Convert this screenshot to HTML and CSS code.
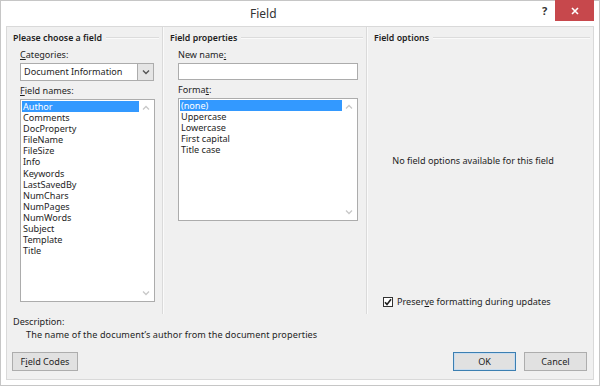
FILE: index.html
```html
<!doctype html>
<html>
<head>
<meta charset="utf-8">
<title>Field</title>
<link rel="stylesheet" href="styles.css">
</head>
<body>
<div class="window">
    <div class="titlebar">
        <span class="title">Field</span>
        <span class="help">?</span>
        <span class="close">
            <svg width="10" height="10" viewBox="0 0 10 10"><path d="M2 2 L8 8 M8 2 L2 8" stroke="#fff" stroke-width="1.6"/></svg>
        </span>
    </div>

    <div class="panel">
        <div class="columns">
            <section class="group choose">
                <div class="group-head"><span>Please choose a field</span></div>
                <div class="group-body">
                    <label><u>C</u>ategories:</label>
                    <div class="select">
                        <span class="select-value">Document Information</span>
                        <span class="select-btn">
                            <svg width="8" height="6" viewBox="0 0 8 6"><path d="M1 1.5 L4 4.5 L7 1.5" fill="none" stroke="#555" stroke-width="1.4"/></svg>
                        </span>
                    </div>
                    <label><u>F</u>ield names:</label>
                    <div class="listbox names">
                        <ul>
                            <li class="sel">Author</li>
                            <li>Comments</li>
                            <li>DocProperty</li>
                            <li>FileName</li>
                            <li>FileSize</li>
                            <li>Info</li>
                            <li>Keywords</li>
                            <li>LastSavedBy</li>
                            <li>NumChars</li>
                            <li>NumPages</li>
                            <li>NumWords</li>
                            <li>Subject</li>
                            <li>Template</li>
                            <li>Title</li>
                        </ul>
                        <div class="scroll">
                            <svg width="8" height="6" viewBox="0 0 8 6"><path d="M1 4.5 L4 1.5 L7 4.5" fill="none" stroke="#c8c8c8" stroke-width="1.3"/></svg>
                            <svg width="8" height="6" viewBox="0 0 8 6"><path d="M1 1.5 L4 4.5 L7 1.5" fill="none" stroke="#c8c8c8" stroke-width="1.3"/></svg>
                        </div>
                    </div>
                </div>
            </section>

            <section class="group props">
                <div class="group-head"><span>Field properties</span></div>
                <div class="group-body">
                    <label>New name<u>:</u></label>
                    <div class="textbox"></div>
                    <label>Forma<u>t</u>:</label>
                    <div class="listbox formats">
                        <ul>
                            <li class="sel">(none)</li>
                            <li>Uppercase</li>
                            <li>Lowercase</li>
                            <li>First capital</li>
                            <li>Title case</li>
                        </ul>
                        <div class="scroll">
                            <svg width="8" height="6" viewBox="0 0 8 6"><path d="M1 4.5 L4 1.5 L7 4.5" fill="none" stroke="#c8c8c8" stroke-width="1.3"/></svg>
                            <svg width="8" height="6" viewBox="0 0 8 6"><path d="M1 1.5 L4 4.5 L7 1.5" fill="none" stroke="#c8c8c8" stroke-width="1.3"/></svg>
                        </div>
                    </div>
                </div>
            </section>

            <section class="group options">
                <div class="group-head"><span>Field options</span></div>
                <div class="group-body options-body">
                    <p class="empty">No field options available for this field</p>
                    <div class="check">
                        <span class="box">
                            <svg width="8" height="8" viewBox="0 0 8 8"><path d="M1 4.2 L3 6.4 L7 1.2" fill="none" stroke="#222" stroke-width="1.6"/></svg>
                        </span>
                        <span>Preser<u>v</u>e formatting during updates</span>
                    </div>
                </div>
            </section>
        </div>

        <div class="desc">
            <div>Description:</div>
            <div class="desc-text">The name of the document’s author from the document properties</div>
        </div>

        <div class="buttons">
            <button class="btn codes">F<u>i</u>eld Codes</button>
            <span class="spacer"></span>
            <button class="btn ok">OK</button>
            <button class="btn">Cancel</button>
        </div>
    </div>
</div>
</body>
</html>
```

FILE: styles.css
```css
html, body {
    margin: 0;
    padding: 0;
    background: #ffffff;
}

body {
    font-family: "Noto Sans", "Open Sans", sans-serif;
    font-size: 9.1px;
    color: #1e1e1e;
}

u {
    text-decoration: underline;
    text-underline-offset: 1px;
}

.window {
    width: 600px;
    height: 386px;
    box-sizing: border-box;
    border: 1px solid #c6c6c6;
    background: #ffffff;
    display: flex;
    flex-direction: column;
}

.titlebar {
    height: 25px;
    position: relative;
}

.title {
    position: absolute;
    left: 249px;
    top: 4px;
    font-size: 12px;
    color: #333;
}

.help {
    position: absolute;
    left: 541px;
    top: 2px;
    font-size: 11px;
    font-weight: bold;
    color: #333;
}

.close {
    position: absolute;
    left: 554px;
    top: -1px;
    width: 39px;
    height: 21px;
    background: #c7484c;
    display: flex;
    align-items: center;
    justify-content: center;
}

.panel {
    flex: 1;
    margin: 0 5px 5px 5px;
    background: #f0f0f0;
    border: 1px solid #d9d9d9;
    display: flex;
    flex-direction: column;
}

.columns {
    display: flex;
    height: 287px;
}

.group {
    display: flex;
    flex-direction: column;
    border-left: 1px solid #dadada;
    box-shadow: inset 1px 0 0 #fafafa;
}

.choose {
    width: 154px;
    border-left-color: transparent;
    box-shadow: none;
}

.props {
    width: 203px;
}

.options {
    flex: 1;
}

.group-head {
    display: flex;
    align-items: center;
    height: 12px;
    margin-top: 5px;
    padding-left: 5px;
    padding-right: 3px;
}

.props .group-head,
.options .group-head {
    padding-left: 7px;
}

.group-head span {
    color: #1e1e1e;
    font-weight: 600;
    font-size: 8.8px;
    padding-right: 4px;
}

.group-head::after {
    content: "";
    flex: 1;
    height: 1px;
    background: #dcdcdc;
    border-bottom: 1px solid #fafafa;
}

.group-body {
    display: flex;
    flex-direction: column;
    padding: 5px 0 0 12px;
}

.props .group-body {
    padding-left: 15px;
}

label {
    display: block;
    height: 12px;
    line-height: 12px;
    margin-bottom: 2px;
}

.select {
    width: 134px;
    height: 18px;
    box-sizing: border-box;
    border: 1px solid #acacac;
    background: #ffffff;
    display: flex;
    align-items: stretch;
    margin-bottom: 4px;
}

.select-value {
    flex: 1;
    padding-left: 3px;
    line-height: 16px;
}

.select-btn {
    width: 15px;
    border-left: 1px solid #acacac;
    background: #e5e5e5;
    display: flex;
    align-items: center;
    justify-content: center;
}

.textbox {
    width: 180px;
    height: 17px;
    box-sizing: border-box;
    border: 1px solid #acacac;
    background: #ffffff;
    margin-bottom: 4px;
}

.listbox {
    box-sizing: border-box;
    border: 1px solid #acacac;
    background: #ffffff;
    display: flex;
    padding: 1px;
}

.names {
    width: 135px;
    height: 203px;
}

.formats {
    width: 180px;
    height: 123px;
}

.listbox ul {
    list-style: none;
    margin: 0;
    padding: 0;
    flex: 1;
}

.listbox li {
    height: 11.1px;
    line-height: 11px;
    padding-left: 1px;
    white-space: nowrap;
}

.listbox li.sel {
    background: #3399ff;
    color: #ffffff;
}

.scroll {
    width: 14px;
    display: flex;
    flex-direction: column;
    justify-content: space-between;
    align-items: center;
    padding: 4px 0 4px 0;
}

.options-body {
    flex: 1;
    padding: 0 0 0 16px;
    justify-content: space-between;
}

.empty {
    margin: 110px 0 0 0;
    text-align: center;
    padding-right: 30px;
}

.check {
    display: flex;
    align-items: center;
    gap: 4px;
    margin-bottom: 6px;
}

.box {
    width: 10px;
    height: 10px;
    box-sizing: border-box;
    border: 1px solid #333;
    background: #ffffff;
    display: flex;
    align-items: center;
    justify-content: center;
}

.desc {
    padding: 1px 0 0 6px;
    line-height: 13px;
}

.desc-text {
    padding-left: 13px;
    letter-spacing: 0.1px;
}

.buttons {
    display: flex;
    align-items: center;
    padding: 11px 6px 0 5px;
    gap: 8px;
}

.spacer {
    flex: 1;
}

.btn {
    height: 19px;
    width: 63px;
    box-sizing: border-box;
    border: 1px solid #adadad;
    background: #e1e1e1;
    font-family: inherit;
    font-size: 9.1px;
    color: #1e1e1e;
    padding: 0;
}

.codes {
    width: 66px;
}

.ok {
    border-color: #3c7fb1;
    box-shadow: inset 0 0 0 1px #c8dcef;
}
```
